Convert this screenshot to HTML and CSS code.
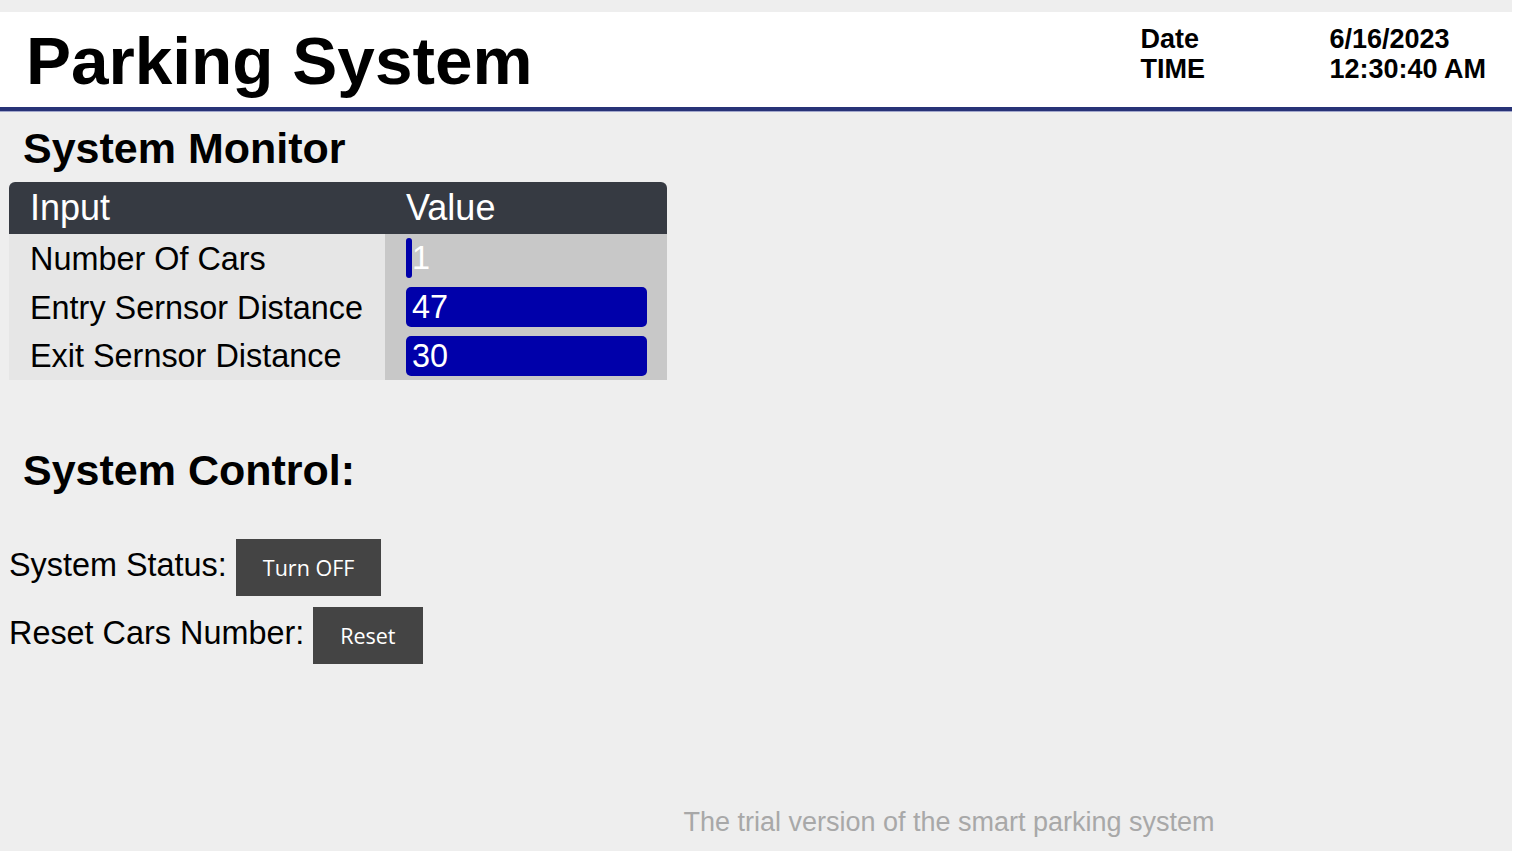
FILE: index.html
```html
<!DOCTYPE html>
<html lang="en">
<head>
<meta charset="utf-8">
<title>Parking System</title>
<link rel="stylesheet" href="styles.css">
</head>
<body>
<div class="page">
  <header class="topbar">
    <h1 class="title">Parking System</h1>
    <div class="clock">
      <span class="clock-label">Date</span><span class="clock-value">6/16/2023</span>
      <span class="clock-label">TIME</span><span class="clock-value">12:30:40 AM</span>
    </div>
  </header>

  <main class="main">
    <h2 class="section-title">System Monitor</h2>
    <table class="monitor">
      <thead>
        <tr><th class="col-input">Input</th><th class="col-value">Value</th></tr>
      </thead>
      <tbody>
        <tr>
          <td class="cell-label">Number Of Cars</td>
          <td class="cell-value"><div class="bar" style="width: 2.5%">1</div></td>
        </tr>
        <tr>
          <td class="cell-label">Entry Sernsor Distance</td>
          <td class="cell-value"><div class="bar" style="width: 100%">47</div></td>
        </tr>
        <tr>
          <td class="cell-label">Exit Sernsor Distance</td>
          <td class="cell-value"><div class="bar" style="width: 100%">30</div></td>
        </tr>
      </tbody>
    </table>

    <h2 class="section-title control-title">System Control:</h2>
    <div class="controls">
      <div class="control-row">
        <span class="control-label">System Status:</span>
        <button class="btn" type="button">Turn OFF</button>
      </div>
      <div class="control-row">
        <span class="control-label">Reset Cars Number:</span>
        <button class="btn" type="button">Reset</button>
      </div>
    </div>
  </main>

  <footer class="footer">The trial version of the smart parking system</footer>
</div>
</body>
</html>
```

FILE: styles.css
```css
html, body {
  margin: 0;
  padding: 0;
  background: #ffffff;
}

body {
  font-family: "Liberation Sans", Arial, sans-serif;
  color: #000;
}

.page {
  width: 1512px;
  height: 851px;
  background: #eeeeee;
  padding-top: 12px;
  box-sizing: border-box;
  display: flex;
  flex-direction: column;
}

.topbar {
  height: 95px;
  background: #ffffff;
  border-bottom: 4px solid #283377;
  box-shadow: 0 1px 0 #a2a7cc;
  display: flex;
  justify-content: space-between;
  align-items: flex-start;
  padding: 0 26px 0 26px;
  flex-shrink: 0;
}

.title {
  margin: 11px 0 0 0;
  font-size: 67.5px;
  font-weight: bold;
  line-height: 76px;
}

.clock {
  margin-top: 12px;
  display: grid;
  grid-template-columns: 189px auto;
  font-size: 27px;
  font-weight: bold;
  line-height: 30px;
}

.main {
  padding: 13px 0 0 9px;
}

.section-title {
  margin: 0;
  padding-left: 14px;
  font-size: 43px;
  font-weight: bold;
  line-height: 48px;
}

.monitor {
  margin-top: 10px;
  border-collapse: separate;
  border-spacing: 0;
  width: 658px;
  table-layout: fixed;
}

.monitor th {
  background: #363a42;
  color: #ffffff;
  font-weight: normal;
  font-size: 36px;
  text-align: left;
  height: 52px;
  padding: 0;
  line-height: 52px;
}

.col-input {
  width: 355px;
  padding-left: 21px !important;
  border-top-left-radius: 6px;
}

.col-value {
  padding-left: 21px !important;
  border-top-right-radius: 6px;
}

.monitor td {
  font-size: 32.4px;
  padding: 0;
}

.cell-label {
  background: #e6e6e6;
  padding-left: 21px !important;
  padding-top: 2px !important;
  height: 46.7px;
  white-space: nowrap;
}

.cell-value {
  background: #c8c8c8;
  padding: 4px 20px 4px 21px !important;
}

.bar {
  box-sizing: border-box;
  height: 40px;
  line-height: 41px;
  background: #0000aa;
  color: #ffffff;
  border-radius: 5px;
  padding-left: 6px;
  white-space: nowrap;
  overflow: visible;
}

.control-title {
  margin-top: 66px;
}

.controls {
  margin-top: 45px;
  display: flex;
  flex-direction: column;
  gap: 11px;
}

.control-row {
  display: flex;
  align-items: center;
  gap: 9px;
}

.control-label {
  font-size: 32.4px;
  position: relative;
  top: -2px;
}

.btn {
  background: #444444;
  color: #ffffff;
  border: none;
  border-radius: 0;
  font-family: "Open Sans", sans-serif;
  font-size: 21.5px;
  padding: 14px 27px;
  line-height: 29px;
  cursor: pointer;
}

.footer {
  margin-top: auto;
  padding: 0 0 13px 386px;
  text-align: center;
  color: #a8a8a8;
  font-size: 27px;
  line-height: 31px;
}
```
